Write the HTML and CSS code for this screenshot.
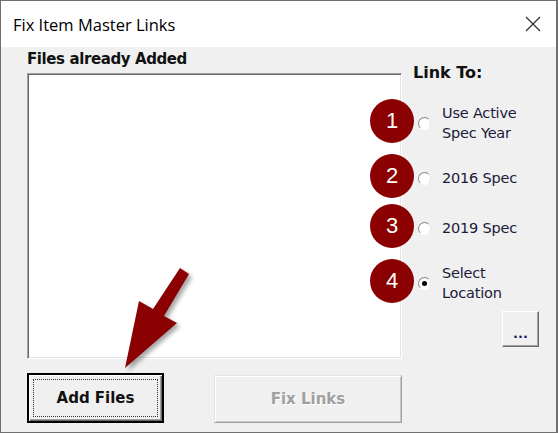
FILE: index.html
```html
<!DOCTYPE html>
<html lang="en">
  <head>
    <meta charset="UTF-8" />
    <meta name="viewport" content="width=device-width, initial-scale=1.0" />
    <title>Fix Item Master Links</title>
    <link rel="stylesheet" href="styles.css">
  </head>
  <body>
    <!-- Dialog window -->
    <div class="window">
      <!-- Title bar -->
      <div class="titlebar">
        <span class="title">Fix Item Master Links</span>
        <svg class="close" width="16" height="16" viewBox="0 0 16 16">
          <path d="M1 1 L15 15 M15 1 L1 15" stroke="#333" stroke-width="1.3" fill="none" />
        </svg>
      </div>

      <!-- Dialog body -->
      <div class="dialog">
        <!-- Files list -->
        <div class="files">
          <div class="files-label">Files already Added</div>
          <div class="listbox"></div>
          <div class="actions">
            <button class="btn btn-default"><span class="focus">Add Files</span></button>
            <button class="btn btn-disabled">Fix Links</button>
          </div>
        </div>

        <!-- Link options -->
        <div class="link-to">
          <div class="link-label">Link To:</div>
          <div class="option tall">
            <span class="marker">1</span>
            <span class="radio"></span>
            <span class="option-text">Use Active<br>Spec Year</span>
          </div>
          <div class="option">
            <span class="marker">2</span>
            <span class="radio"></span>
            <span class="option-text">2016 Spec</span>
          </div>
          <div class="option">
            <span class="marker">3</span>
            <span class="radio"></span>
            <span class="option-text">2019 Spec</span>
          </div>
          <div class="option tall">
            <span class="marker">4</span>
            <span class="radio checked"></span>
            <span class="option-text">Select<br>Location</span>
          </div>
          <button class="btn-browse">...</button>
        </div>
      </div>

      <!-- Annotation arrow -->
      <svg class="arrow" width="558" height="433" viewBox="0 0 558 433">
        <polygon points="180,268 189,274 164,316 177,323 125,368 139,301 153,309" fill="#8b0000" />
      </svg>
    </div>
  </body>
</html>
```

FILE: styles.css
```css
/* Page */
body {
  margin: 0;
  padding: 0;
  background-color: #fff;
  font-family: "DejaVu Sans", Tahoma, sans-serif;
  color: #111;
}

/* Dialog window */
.window {
  position: relative;
  box-sizing: border-box;
  width: 558px;
  height: 433px;
  border: 1px solid #707070;
  border-right-width: 2px;
  background-color: #f0f0f0;
  overflow: hidden;
}

/* Title bar */
.titlebar {
  display: flex;
  align-items: center;
  height: 46px;
  padding-left: 12px;
  padding-right: 15px;
  background-color: #fff;
}
.title {
  font-family: "Open Sans", "Noto Sans", sans-serif;
  font-size: 16.5px;
  color: #000;
}
.close {
  margin-left: auto;
}

/* Dialog body */
.dialog {
  display: flex;
  padding-left: 26px;
  padding-top: 2px;
}

/* Files column */
.files {
  width: 375px;
}
.files-label {
  font-size: 15px;
  font-weight: bold;
  letter-spacing: -0.4px;
  line-height: 20px;
  margin-bottom: 4px;
}
.listbox {
  box-sizing: border-box;
  height: 286px;
  background-color: #fff;
  border: 1px solid;
  border-color: #a0a0a0 #fff #fff #a0a0a0;
  box-shadow: inset 1px 1px 0 #696969, inset -1px -1px 0 #e3e3e3;
}
.actions {
  display: flex;
  justify-content: space-between;
  align-items: flex-end;
  margin-top: 14px;
}

/* Buttons */
.btn {
  box-sizing: border-box;
  font-family: "DejaVu Sans", Tahoma, sans-serif;
  font-size: 15px;
  font-weight: bold;
  background-color: #f0f0f0;
  color: #111;
  padding: 0;
  margin: 0;
}
.btn-default {
  width: 137px;
  height: 50px;
  border: 2px solid #000;
  box-shadow: inset 1px 1px 0 #fff, inset -1px -1px 0 #696969, inset -2px -2px 0 #a0a0a0;
  display: flex;
  padding: 4px;
}
.btn-default .focus {
  flex: 1;
  display: flex;
  align-items: center;
  justify-content: center;
  border: 1px dotted #333;
}
.btn-disabled {
  width: 188px;
  height: 48px;
  border: 1px solid;
  border-color: #e3e3e3 #a0a0a0 #a0a0a0 #e3e3e3;
  box-shadow: inset 1px 1px 0 #fff, inset -1px -1px 0 #c8c8c8;
  color: #a0a0a0;
  text-shadow: 1px 1px 0 #fff;
}

/* Link options column */
.link-to {
  margin-left: 11px;
  padding-top: 14px;
  flex: 1;
}
.link-label {
  font-size: 16px;
  font-weight: bold;
  line-height: 20px;
  margin-bottom: 10px;
}
.option {
  position: relative;
  display: flex;
  align-items: center;
  height: 50px;
}
.option.tall {
  height: 60px;
}
.radio {
  box-sizing: border-box;
  flex: none;
  width: 13px;
  height: 13px;
  margin-left: 5px;
  border-radius: 50%;
  border: 1px solid;
  border-color: #8a8a8a #e8e8e8 #fff #8a8a8a;
  background-color: #fff;
  display: flex;
  align-items: center;
  justify-content: center;
}
.radio.checked::after {
  content: "";
  width: 5px;
  height: 5px;
  border-radius: 50%;
  background-color: #000;
}
.option-text {
  margin-left: 11px;
  font-size: 14.5px;
  letter-spacing: -0.2px;
  line-height: 20px;
  color: #1a1a3a;
  white-space: nowrap;
}

/* Number markers */
.marker {
  position: absolute;
  left: -43px;
  top: 50%;
  margin-top: -24px;
  width: 44px;
  height: 44px;
  border-radius: 50%;
  background-color: #8b0000;
  color: #fff;
  font-family: "Liberation Sans", Arial, sans-serif;
  font-size: 22px;
  display: flex;
  align-items: center;
  justify-content: center;
}

/* Browse button */
.btn-browse {
  box-sizing: border-box;
  display: block;
  width: 37px;
  height: 36px;
  margin-left: 89px;
  margin-top: -2px;
  padding: 8px 0 0;
  background-color: #f0f0f0;
  border: 1px solid;
  border-color: #fff #696969 #696969 #fff;
  box-shadow: inset -1px -1px 0 #a0a0a0;
  font-family: "DejaVu Sans", Tahoma, sans-serif;
  font-size: 13px;
  font-weight: bold;
  color: #1a1a6a;
}

/* Annotation arrow */
.arrow {
  position: absolute;
  left: -1px;
  top: -1px;
  pointer-events: none;
  filter: drop-shadow(3px 3px 2px rgba(0, 0, 0, 0.35));
}
```
